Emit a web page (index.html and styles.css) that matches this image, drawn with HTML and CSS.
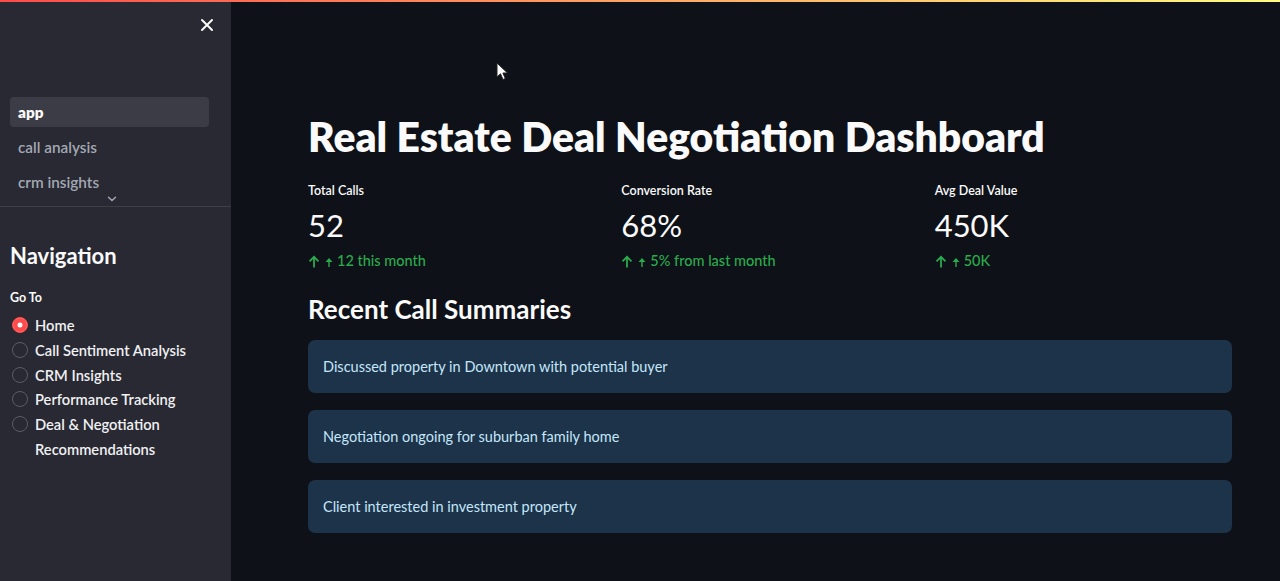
FILE: index.html
```html
<!DOCTYPE html>
<html lang="en">
<head>
<meta charset="utf-8">
<title>Real Estate Deal Negotiation Dashboard</title>
<link rel="stylesheet" href="styles.css">
</head>
<body>
<div class="app">
  <div class="decoration"></div>
  <div class="layout">
    <aside class="sidebar">
      <div class="sidebar-header">
        <button class="close-btn" aria-label="Close sidebar">
          <svg width="14" height="14" viewBox="0 0 14 14"><path d="M2 2 L12 12 M12 2 L2 12" stroke="#fafafa" stroke-width="2" stroke-linecap="round"/></svg>
        </button>
      </div>
      <nav class="page-nav">
        <a class="page-link active">app</a>
        <a class="page-link">call analysis</a>
        <a class="page-link">crm insights</a>
        <div class="nav-more">
          <svg width="10" height="6" viewBox="0 0 10 6"><path d="M1.5 1.2 L5 4.5 L8.5 1.2" stroke="#a3a8b8" stroke-width="1.4" fill="none" stroke-linecap="round"/></svg>
        </div>
      </nav>
      <div class="sidebar-content">
        <h2 class="nav-title">Navigation</h2>
        <div class="radio-label">Go To</div>
        <div class="radio-group">
          <label class="radio checked"><span class="dot"></span><span class="radio-text">Home</span></label>
          <label class="radio"><span class="dot"></span><span class="radio-text">Call Sentiment Analysis</span></label>
          <label class="radio"><span class="dot"></span><span class="radio-text">CRM Insights</span></label>
          <label class="radio"><span class="dot"></span><span class="radio-text">Performance Tracking</span></label>
          <label class="radio"><span class="dot"></span><span class="radio-text">Deal &amp; Negotiation Recommendations</span></label>
        </div>
      </div>
    </aside>
    <main class="main">
      <h1 class="title">Real Estate Deal Negotiation Dashboard</h1>
      <div class="metrics">
        <div class="metric">
          <div class="metric-label">Total Calls</div>
          <div class="metric-value">52</div>
          <div class="metric-delta"><svg class="delta-icon" width="12" height="13" viewBox="0 0 12 13"><path d="M6 12.5 V2 M1.5 6.3 L6 1.8 L10.5 6.3" stroke="currentColor" stroke-width="1.8" fill="none"/></svg><svg class="small-arrow" width="8" height="10" viewBox="0 0 8 10"><path d="M4 10 V4" stroke="currentColor" stroke-width="1.4"/><path d="M0.5 5 L4 1 L7.5 5 Z" fill="currentColor"/></svg>12 this month</div>
        </div>
        <div class="metric">
          <div class="metric-label">Conversion Rate</div>
          <div class="metric-value">68%</div>
          <div class="metric-delta"><svg class="delta-icon" width="12" height="13" viewBox="0 0 12 13"><path d="M6 12.5 V2 M1.5 6.3 L6 1.8 L10.5 6.3" stroke="currentColor" stroke-width="1.8" fill="none"/></svg><svg class="small-arrow" width="8" height="10" viewBox="0 0 8 10"><path d="M4 10 V4" stroke="currentColor" stroke-width="1.4"/><path d="M0.5 5 L4 1 L7.5 5 Z" fill="currentColor"/></svg>5% from last month</div>
        </div>
        <div class="metric">
          <div class="metric-label">Avg Deal Value</div>
          <div class="metric-value">450K</div>
          <div class="metric-delta"><svg class="delta-icon" width="12" height="13" viewBox="0 0 12 13"><path d="M6 12.5 V2 M1.5 6.3 L6 1.8 L10.5 6.3" stroke="currentColor" stroke-width="1.8" fill="none"/></svg><svg class="small-arrow" width="8" height="10" viewBox="0 0 8 10"><path d="M4 10 V4" stroke="currentColor" stroke-width="1.4"/><path d="M0.5 5 L4 1 L7.5 5 Z" fill="currentColor"/></svg>50K</div>
        </div>
      </div>
      <h3 class="section-title">Recent Call Summaries</h3>
      <div class="summaries">
        <div class="info">Discussed property in Downtown with potential buyer</div>
        <div class="info">Negotiation ongoing for suburban family home</div>
        <div class="info">Client interested in investment property</div>
      </div>
      <svg class="cursor" width="14" height="20" viewBox="0 0 14 20"><path d="M1 1 L1 15 L4.5 11.8 L7 17.5 L9.3 16.5 L6.9 11 L11.5 11 Z" fill="#fff" stroke="#222" stroke-width="1"/></svg>
    </main>
  </div>
</div>
</body>
</html>
```
FILE: styles.css
```css
* { box-sizing: border-box; }
html, body { margin: 0; padding: 0; }
body {
  background: #0e1117;
  color: #fafafa;
  font-family: "Lato", "Open Sans", sans-serif;
  width: 1280px;
  height: 581px;
  overflow: hidden;
}
.app { display: flex; flex-direction: column; height: 581px; }
.decoration {
  height: 2px;
  flex: none;
  background: linear-gradient(90deg, #ff4b4b, #fffd80);
}
.layout { display: flex; flex: 1; min-height: 0; }

.sidebar {
  width: 231px;
  flex: none;
  background: #282932;
  display: flex;
  flex-direction: column;
}
.sidebar-header {
  height: 92px;
  display: flex;
  justify-content: flex-end;
  padding: 14px 16px 0 0;
}
.close-btn {
  background: none;
  border: none;
  width: 16px;
  height: 16px;
  padding: 0;
  margin-top: 1px;
  display: flex;
  align-items: center;
  justify-content: center;
}
.page-nav {
  display: flex;
  flex-direction: column;
  gap: 5px;
  padding: 3px 22px 0 10px;
  border-bottom: 1px solid #3d3e47;
  height: 113px;
}
.page-link {
  height: 30px;
  display: flex;
  align-items: center;
  padding: 0 8px;
  border-radius: 4px;
  font-size: 15.3px;
  font-weight: 600;
  color: #a3a8b4;
}
.page-link.active {
  background: #3b3c46;
  color: #fafafa;
  font-weight: 800;
}
.nav-more {
  display: flex;
  justify-content: center;
  margin-top: -6px;
  padding-left: 4px;
}
.sidebar-content { padding: 35px 10px 0 10px; }
.nav-title {
  margin: 0;
  font-size: 22px;
  font-weight: 700;
  line-height: 28px;
}
.radio-label {
  font-size: 12.5px;
  font-weight: 700;
  margin-top: 20px;
  line-height: 16px;
}
.radio-group {
  display: flex;
  flex-direction: column;
  margin-top: 7px;
}
.radio {
  display: flex;
  align-items: flex-start;
  font-size: 14.7px;
  line-height: 24.8px;
  font-weight: 600;
  color: #f0f0f2;
}
.radio-text { width: 160px; }
.dot {
  width: 16px;
  height: 16px;
  border-radius: 50%;
  border: 1px solid #5a5c66;
  margin: 4px 7px 0 2px;
  flex: none;
}
.radio.checked .dot {
  background: #ff4b4b;
  border-color: #ff4b4b;
  box-shadow: inset 0 0 0 4.5px #ff4b4b, inset 0 0 0 8px #fff;
}

.main {
  flex: 1;
  padding: 111px 48px 0 77px;
  position: relative;
}
.title {
  margin: 0;
  font-size: 40.8px;
  font-weight: 800;
  line-height: 48px;
  letter-spacing: 0;
}
.metrics {
  display: grid;
  grid-template-columns: repeat(3, 1fr);
  gap: 16px;
  margin-top: 22px;
}
.metric-label { font-size: 12.5px; line-height: 16px; color: #fafafa; font-weight: 600; }
.metric-value { font-size: 31px; line-height: 40px; margin-top: 6px; font-weight: 400; }
.metric-delta {
  display: flex;
  align-items: center;
  font-size: 14.5px;
  color: #2aab4d;
  margin-top: 6px;
  line-height: 20px;
  font-weight: 500;
}
.delta-icon { margin-right: 5px; }
.small-arrow { margin-right: 4px; margin-top: 2px; }
.section-title {
  margin: 22px 0 0 0;
  font-size: 26px;
  font-weight: 700;
  line-height: 32px;
}
.summaries {
  display: flex;
  flex-direction: column;
  gap: 17px;
  margin-top: 15px;
}
.info {
  height: 53px;
  border-radius: 7px;
  background: #1c3349;
  color: #c5e6fa;
  font-size: 14.5px;
  display: flex;
  align-items: center;
  padding: 0 15px;
}
.cursor { position: absolute; left: 265px; top: 60px; }
```
